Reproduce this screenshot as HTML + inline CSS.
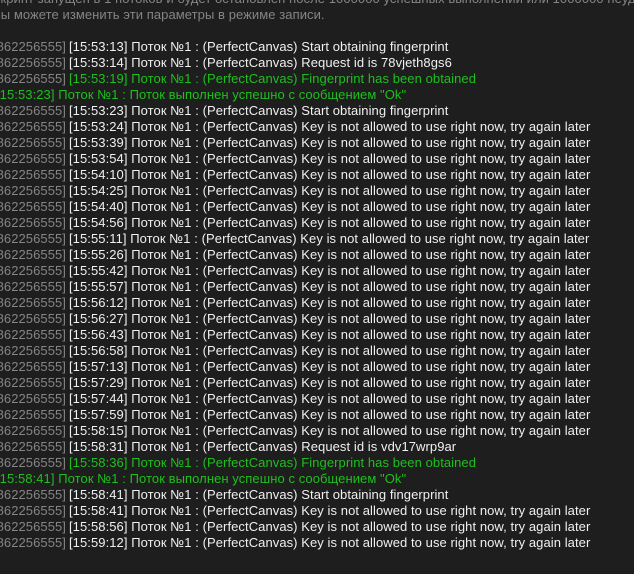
<!DOCTYPE html>
<html><head><meta charset="utf-8"><style>
body{margin:0;width:634px;height:574px;background:#1e1e1e;overflow:hidden;font-family:"Liberation Sans","DejaVu Sans",sans-serif;font-size:13px;letter-spacing:0.07px;}
#wrap{position:absolute;left:0;top:0;width:634px;height:574px;overflow:hidden;}
.l{position:absolute;height:16px;line-height:16px;white-space:nowrap;}
.g{color:#858585;}
.w{color:#f0f0f0;}
.gr{color:#1fbf1f;}
.p{position:absolute;right:568px;text-align:right;}
.t{position:absolute;left:69px;}
</style></head><body><div id="wrap">
<div class="l g" style="top:-9px;left:-9px">Скрипт запущен в 1 потоков и будет остановлен после 1000000 успешных выполнений или 1000000 неудач</div>
<div class="l g" style="top:7px;left:-8px">Вы можете изменить эти параметры в режиме записи.</div>
<div id="c"></div>
</div>
<script>
var L=[
["w","15:53:13","(PerfectCanvas) Start obtaining fingerprint"],
["w","15:53:14","(PerfectCanvas) Request id is 78vjeth8gs6"],
["gr","15:53:19","(PerfectCanvas) Fingerprint has been obtained"],
["R","15:53:23"],
["w","15:53:23","(PerfectCanvas) Start obtaining fingerprint"]];
var K="(PerfectCanvas) Key is not allowed to use right now, try again later";
"15:53:24 15:53:39 15:53:54 15:54:10 15:54:25 15:54:40 15:54:56 15:55:11 15:55:26 15:55:42 15:55:57 15:56:12 15:56:27 15:56:43 15:56:58 15:57:13 15:57:29 15:57:44 15:57:59 15:58:15".split(" ").forEach(function(t){L.push(["w",t,K]);});
L.push(["w","15:58:31","(PerfectCanvas) Request id is vdv17wrp9ar"]);
L.push(["gr","15:58:36","(PerfectCanvas) Fingerprint has been obtained"]);
L.push(["R","15:58:41"]);
L.push(["w","15:58:41","(PerfectCanvas) Start obtaining fingerprint"]);
["15:58:41","15:58:56","15:59:12"].forEach(function(t){L.push(["w",t,K]);});
var h="";
L.forEach(function(r,i){var top=39+16*i;
if(r[0]=="R"){h+='<div class="l gr" style="top:'+top+'px;left:-4px">['+r[1]+'] Поток №1 : Поток выполнен успешно с сообщением "Ok"</div>';}
else{h+='<div class="l" style="top:'+top+'px;left:0;width:634px"><span class="p g">[862256555]</span><span class="t '+r[0]+'">['+r[1]+'] Поток №1 : '+r[2]+'</span></div>';}
});
document.getElementById("c").innerHTML=h;
</script>
</body></html>
